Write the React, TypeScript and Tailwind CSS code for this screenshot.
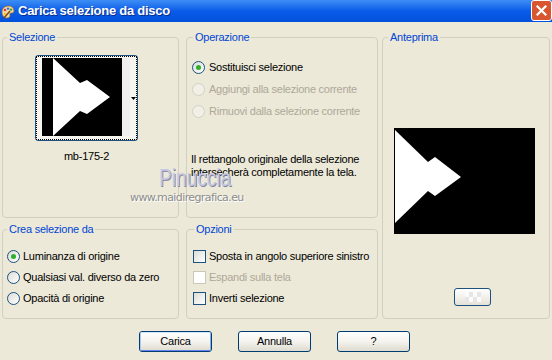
import React from "react";

const ui = "font-['Liberation_Sans',Arial,sans-serif] tracking-[-0.25px]";

function Radio({ checked = false, disabled = false }: { checked?: boolean; disabled?: boolean }) {
  return (
    <span
      className={`flex h-[13px] w-[13px] shrink-0 items-center justify-center rounded-full border ${
        disabled
          ? "border-[#D2D0C4] bg-[#F2F0E6]"
          : "border-[#1C5180] bg-linear-to-br from-[#DCDCD7] to-white"
      }`}
    >
      {checked && <span className="h-[5px] w-[5px] rounded-full bg-[#2DB02D]" />}
    </span>
  );
}

function Check({ disabled = false }: { disabled?: boolean }) {
  return (
    <span
      className={`block h-[13px] w-[13px] shrink-0 border ${
        disabled
          ? "border-[#CAC8BB] bg-white"
          : "border-[#1C5180] bg-linear-to-br from-[#DCDCD7] to-white"
      }`}
    />
  );
}

function Group({
  title,
  className = "",
  legend = "ml-[4px]",
  children,
}: {
  title: string;
  className?: string;
  legend?: string;
  children?: React.ReactNode;
}) {
  return (
    <fieldset className={`rounded-[4px] border border-[#D0D0BF] ${className}`}>
      <legend className={`px-[2px] text-[11px] leading-[13px] text-[#0046D5] ${legend}`}>{title}</legend>
      {children}
    </fieldset>
  );
}

function XpButton({ label, primary = false }: { label: string; primary?: boolean }) {
  return (
    <button className="h-[21px] w-[73px] rounded-[3px] border border-[#003C74] bg-linear-to-b from-white via-[#F4F3EE] to-[#DEDBCF] p-0 text-[11px] text-black">
      <span
        className={`flex h-full w-full items-center justify-center rounded-[2px] ${
          primary ? "border border-t-[#CEE7FF] border-r-[#89ADE4] border-b-[#6982EE] border-l-[#A9C8F5]" : ""
        }`}
      >
        {label}
      </span>
    </button>
  );
}

function TitleIcon() {
  return (
    <svg width="14" height="14" viewBox="0 0 14 14">
      <path d="M1 7 C1 3 4 1 7.5 1 C11 1 13 3 13 6 C13 8 11 8 10 8 C9 8 8.5 9 9 10 C9.5 11.5 8 13 6 13 C3 13 1 10.5 1 7Z" fill="#F1D9A8" stroke="#9A6B2E" strokeWidth="0.8" />
      <circle cx="4" cy="5" r="1.3" fill="#E23B2E" />
      <circle cx="7" cy="3.6" r="1.2" fill="#2D6CE0" />
      <circle cx="10" cy="4.6" r="1.2" fill="#2FA33A" />
      <circle cx="4" cy="9" r="1.2" fill="#F2C21B" />
      <path d="M3 13 L9 6" stroke="#7A4A1A" strokeWidth="1.4" />
    </svg>
  );
}

export default function App() {
  return (
    <div className={`relative flex h-[360px] w-[552px] flex-col overflow-hidden bg-[#ECE9D8] ${ui}`}>
      {/* title bar */}
      <div className="flex h-[22px] shrink-0 items-center bg-linear-to-b from-[#3D8DF5] via-[#0A5BE8] to-[#0251DC]">
        <span className="ml-[1px] mt-[1px] flex">
          <TitleIcon />
        </span>
        <span className="ml-[3px] text-[13px] font-bold text-white [text-shadow:1px_1px_0_#0A2F8A]">
          Carica selezione da disco
        </span>
        <div className="mb-[1px] ml-auto flex h-[21px] w-[21px] shrink-0 items-center justify-center rounded-[3px] border border-white bg-[#D9552F]">
          <svg width="11" height="11" viewBox="0 0 11 11">
            <path d="M1.5 1.5 L9.5 9.5 M9.5 1.5 L1.5 9.5" stroke="#FFFFFF" strokeWidth="2.2" strokeLinecap="square" />
          </svg>
        </div>
      </div>

      <div className="flex pl-[2px] pt-[9px]">
        {/* left column */}
        <div className="flex w-[177px] flex-col gap-[5px]">
          <Group title="Selezione" className="h-[187px]">
            <div className="ml-[32px] mt-[11px] flex w-[103px] flex-col items-center">
              <div className="h-[86px] w-[103px] rounded-[3px] border border-[#1C5180] bg-[#F6F5F0]">
                <div className="flex h-full w-full border border-dotted border-black pl-[5px] pt-[1px]">
                  <svg width="80" height="78" viewBox="0 0 80 78" className="shrink-0">
                    <rect width="80" height="78" fill="black" />
                    <polygon points="11,0 38,25 45,22 68,39 45,56 38,53 11,78" fill="white" />
                  </svg>
                  <div className="h-[78px] w-[8px] bg-[#EFEFEF]" />
                  <div className="flex flex-1 items-center justify-center pb-[1px]">
                    <svg width="5" height="3" viewBox="0 0 5 3">
                      <polygon points="0,0 5,0 2.5,3" fill="black" />
                    </svg>
                  </div>
                </div>
              </div>
              <div className="mt-[9px] text-[11px] leading-[13px] text-black">mb-175-2</div>
            </div>
          </Group>

          <Group title="Crea selezione da" className="h-[96px]">
            <div className="mt-[10px] flex flex-col whitespace-nowrap pl-[4px] text-[11px] text-black">
              <div className="flex h-[21px] items-center gap-[3px]">
                <Radio checked />
                <span>Luminanza di origine</span>
              </div>
              <div className="flex h-[21px] items-center gap-[3px]">
                <Radio />
                <span>Qualsiasi val. diverso da zero</span>
              </div>
              <div className="flex h-[21px] items-center gap-[3px]">
                <Radio />
                <span>Opacità di origine</span>
              </div>
            </div>
          </Group>
        </div>

        {/* middle column */}
        <div className="ml-[7px] flex w-[192px] flex-col gap-[5px]">
          <Group title="Operazione" legend="ml-[6px]" className="h-[187px]">
            <div className="mt-[12px] flex flex-col whitespace-nowrap pl-[5px] text-[11px]">
              <div className="flex h-[22px] items-center gap-[4px] text-black">
                <Radio checked />
                <span>Sostituisci selezione</span>
              </div>
              <div className="flex h-[22px] items-center gap-[4px] text-[#ACA899]">
                <Radio disabled />
                <span>Aggiungi alla selezione corrente</span>
              </div>
              <div className="flex h-[22px] items-center gap-[4px] text-[#ACA899]">
                <Radio disabled />
                <span>Rimuovi dalla selezione corrente</span>
              </div>
            </div>
            <p className="mt-[31px] whitespace-nowrap pl-[4px] text-[11px] leading-[13px] text-black">
              Il rettangolo originale della selezione
              <br />
              intersecherà completamente la tela.
            </p>
          </Group>

          <Group title="Opzioni" legend="ml-[7px]" className="h-[96px]">
            <div className="mt-[10px] flex flex-col whitespace-nowrap pl-[6px] text-[11px]">
              <div className="flex h-[21px] items-center gap-[3px] text-black">
                <Check />
                <span>Sposta in angolo superiore sinistro</span>
              </div>
              <div className="flex h-[21px] items-center gap-[3px] text-[#ACA899]">
                <Check disabled />
                <span>Espandi sulla tela</span>
              </div>
              <div className="flex h-[21px] items-center gap-[3px] text-black">
                <Check />
                <span>Inverti selezione</span>
              </div>
            </div>
          </Group>
        </div>

        {/* preview */}
        <Group title="Anteprima" legend="ml-[5px]" className="ml-[4px] h-[288px] w-[168px]">
          <div className="ml-[11px] mt-[84px] h-[106px] w-[141px]">
            <svg width="141" height="106" viewBox="0 0 141 106">
              <rect width="141" height="106" fill="black" />
              <polygon points="1,2 34,34 41,29 67,49 41,68 34,63 1,95" fill="white" />
            </svg>
          </div>
          <div className="ml-[71px] mt-[54px] flex h-[18px] w-[37px] items-center justify-center rounded-[3px] border border-[#1C5180] bg-linear-to-b from-white to-[#E4E2D8]">
            <div className="grid grid-cols-4 grid-rows-2">
              <span className="h-[5px] w-[4px] bg-[#FBFBFB]" />
              <span className="h-[5px] w-[4px] bg-[#E6E6E6]" />
              <span className="h-[5px] w-[4px] bg-[#FBFBFB]" />
              <span className="h-[5px] w-[4px] bg-[#E6E6E6]" />
              <span className="h-[5px] w-[4px] bg-[#E6E6E6]" />
              <span className="h-[5px] w-[4px] bg-[#FBFBFB]" />
              <span className="h-[5px] w-[4px] bg-[#E6E6E6]" />
              <span className="h-[5px] w-[4px] bg-[#FBFBFB]" />
            </div>
          </div>
        </Group>
      </div>

      {/* buttons */}
      <div className="mt-[12px] flex gap-[26px] pl-[139px]">
        <XpButton label="Carica" primary />
        <XpButton label="Annulla" />
        <XpButton label="?" />
      </div>

      {/* watermark */}
      <div className="pointer-events-none absolute left-[159px] top-[167px] origin-left scale-x-[0.83] text-[23px] leading-[23px] tracking-normal text-[#C4C7E2] [text-shadow:1px_1px_0_#7E8298]">
        Pinuccia
      </div>
      <div className="pointer-events-none absolute left-[130px] top-[192px] font-['DejaVu_Sans',sans-serif] text-[11px] leading-[11px] tracking-[-0.6px] text-[#8C8C8C] [text-shadow:1px_1px_0_#FFFFFF]">
        www.maidiregrafica.eu
      </div>
    </div>
  );
}
